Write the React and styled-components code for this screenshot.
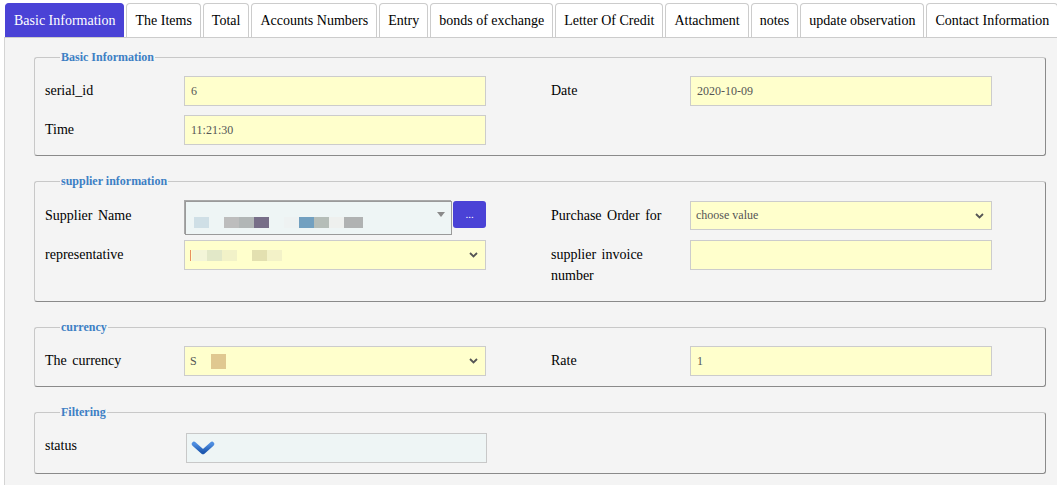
import React from 'react';
import styled, { createGlobalStyle } from 'styled-components';

const GlobalStyle = createGlobalStyle`
  html, body {
    margin: 0;
    padding: 0;
    background: #fff;
    overflow: hidden;
  }
`;

const tabs = [
  'Basic Information',
  'The Items',
  'Total',
  'Accounts Numbers',
  'Entry',
  'bonds of exchange',
  'Letter Of Credit',
  'Attachment',
  'notes',
  'update observation',
  'Contact Information',
];

const Blur = ({ blocks }) => (
  <BlurRow>
    {blocks.map(([w, c, ml], i) => (
      <BlurBlock key={i} style={{ width: w, background: c, marginLeft: ml || 0 }} />
    ))}
  </BlurRow>
);

const Chevron = () => (
  <svg width="9" height="6" viewBox="0 0 9 6">
    <path d="M1 1 L4.5 4.5 L8 1" fill="none" stroke="#555" strokeWidth="1.8" />
  </svg>
);

const App = () => (
  <Page>
    <GlobalStyle />
    <TabBar>
      {tabs.map((t, i) => (
        <Tab key={t} active={i === 0}>{t}</Tab>
      ))}
    </TabBar>
    <Panel>
      <Fieldset>
        <Legend>Basic Information</Legend>
        <Row>
          <Cell>
            <Label>serial_id</Label>
            <Input>6</Input>
          </Cell>
          <Cell>
            <Label>Date</Label>
            <Input>2020-10-09</Input>
          </Cell>
        </Row>
        <Row>
          <Cell>
            <Label>Time</Label>
            <Input>11:21:30</Input>
          </Cell>
        </Row>
      </Fieldset>

      <Fieldset>
        <Legend>supplier information</Legend>
        <Row top={1}>
          <Cell>
            <Label>Supplier Name</Label>
            <SupplierWrap>
              <SupplierSelect>
                <Blur
                  blocks={[
                    [15, '#cfdfe6', 7],
                    [15, '#bdbdbd', 15],
                    [15, '#b1b6b6'],
                    [15, '#776e88'],
                    [15, '#eef2f2', 15],
                    [15, '#72a0c0'],
                    [15, '#b5bdb8'],
                    [15, '#eef0ee'],
                    [19, '#b0b2b2'],
                  ]}
                />
                <Triangle />
              </SupplierSelect>
              <DotsButton>...</DotsButton>
            </SupplierWrap>
          </Cell>
          <Cell>
            <Label>Purchase Order for</Label>
            <Select short>
              <span>choose value</span>
              <Chevron />
            </Select>
          </Cell>
        </Row>
        <Row>
          <Cell>
            <Label>representative</Label>
            <Select>
              <Blur
                blocks={[
                  [1, '#e89060', 0],
                  [15, '#f3f5d8', 1],
                  [15, '#e2e8c8'],
                  [15, '#f2f2c8'],
                  [15, '#e3e0b0', 15],
                  [15, '#f3f2c8'],
                ]}
              />
              <Chevron />
            </Select>
          </Cell>
          <Cell>
            <Label>supplier invoice number</Label>
            <Input />
          </Cell>
        </Row>
      </Fieldset>

      <Fieldset>
        <Legend>currency</Legend>
        <Row>
          <Cell>
            <Label>The currency</Label>
            <Select>
              <CurrencyValue>
                S<CurrencyBlock />
              </CurrencyValue>
              <Chevron />
            </Select>
          </Cell>
          <Cell>
            <Label>Rate</Label>
            <Input>1</Input>
          </Cell>
        </Row>
      </Fieldset>

      <Fieldset>
        <Legend>Filtering</Legend>
        <Row>
          <Cell>
            <Label>status</Label>
            <StatusBox>
              <svg width="24" height="14" viewBox="0 0 24 14">
                <defs>
                  <linearGradient id="chev" x1="0" y1="0" x2="0" y2="1">
                    <stop offset="0" stopColor="#4f8ee0" />
                    <stop offset="1" stopColor="#1d58b0" />
                  </linearGradient>
                </defs>
                <path
                  d="M3 3 L12 11 L21 3"
                  fill="none"
                  stroke="url(#chev)"
                  strokeWidth="4.5"
                  strokeLinecap="round"
                  strokeLinejoin="round"
                />
              </svg>
            </StatusBox>
          </Cell>
        </Row>
      </Fieldset>
    </Panel>
  </Page>
);

const Page = styled.div`
  font-family: "Liberation Serif", Tinos, "Times New Roman", serif;
  color: #000;
`;

const TabBar = styled.div`
  display: flex;
  gap: 2px;
  padding: 3px 0 0 5px;
  height: 34px;
  box-sizing: content-box;
`;

const Tab = styled.div`
  display: flex;
  align-items: center;
  height: 34px;
  box-sizing: border-box;
  padding: 0 8px;
  font-size: 14px;
  white-space: nowrap;
  border: 1px solid ${(p) => (p.active ? '#4a42d6' : '#cccccc')};
  border-bottom: none;
  border-radius: 4px 4px 0 0;
  background: ${(p) => (p.active ? '#4a42d6' : '#ffffff')};
  color: ${(p) => (p.active ? '#ffffff' : '#000000')};
`;

const Panel = styled.div`
  margin-left: 4px;
  width: 1070px;
  min-height: 448px;
  box-sizing: border-box;
  padding-top: 12px;
  background: #f4f4f4;
  border-top: 1px solid #cccccc;
  border-left: 1px solid #d4d4d4;
`;

const Fieldset = styled.fieldset`
  width: 1012px;
  box-sizing: border-box;
  margin: 0 0 18px 29px;
  padding: 12px 0 10px 10px;
  border: 1px solid #c8c8c8;
  border-right-color: #8a8a8a;
  border-bottom-color: #8a8a8a;
  border-radius: 3px;
  display: flex;
  flex-direction: column;
  gap: 9px;
`;

const Legend = styled.legend`
  margin-left: 15px;
  padding: 0 1px;
  font-size: 12px;
  line-height: 14px;
  font-weight: bold;
  color: #3d80c4;
`;

const Row = styled.div`
  display: flex;
  gap: 65px;
  margin-top: ${(p) => p.top || 0}px;
`;

const Cell = styled.div`
  display: grid;
  grid-template-columns: 139px 302px;
  align-items: start;
`;

const Label = styled.div`
  font-size: 14px;
  line-height: 21px;
  padding: 4px 14px 5px 0;
  word-spacing: 2px;
`;

const fieldBase = `
  height: 30px;
  box-sizing: border-box;
  border: 1px solid #cccccc;
  background: #ffffcc;
  font-size: 12px;
  color: #555;
  padding: 0 6px;
  display: flex;
  align-items: center;
`;

const Input = styled.div`
  ${fieldBase}
`;

const Select = styled.div`
  ${fieldBase}
  height: ${(p) => (p.short ? '29px' : '30px')};
  justify-content: space-between;
  padding-right: 7px;
  padding-left: 5px;
`;

const SupplierWrap = styled.div`
  display: flex;
  align-items: flex-start;
  gap: 1px;
  margin-bottom: -5px;
  margin-left: 1px;
`;

const SupplierSelect = styled.div`
  position: relative;
  width: 269px;
  height: 34px;
  box-sizing: border-box;
  border: 1px solid #9a9a9a;
  background: #eef5f5;
  box-shadow: -1px -1px 0 #a8a8a8;
  padding: 15px 0 0 1px;
`;

const Triangle = styled.span`
  position: absolute;
  right: 6px;
  top: 10px;
  width: 0;
  height: 0;
  border-left: 4px solid transparent;
  border-right: 4px solid transparent;
  border-top: 5px solid #8a8a8a;
`;

const DotsButton = styled.div`
  width: 33px;
  height: 27px;
  border-radius: 3px;
  background: #4a42d6;
  color: #fff;
  font-size: 11px;
  display: flex;
  align-items: center;
  justify-content: center;
  line-height: 1;
`;

const BlurRow = styled.div`
  display: flex;
  height: 11px;
`;

const BlurBlock = styled.span`
  display: block;
  height: 100%;
`;

const CurrencyValue = styled.span`
  display: flex;
  align-items: center;
`;

const CurrencyBlock = styled.span`
  display: inline-block;
  width: 15px;
  height: 15px;
  margin-left: 14px;
  background: #e0c890;
`;

const StatusBox = styled.div`
  height: 30px;
  width: 301px;
  margin: 2px 0 0 2px;
  box-sizing: border-box;
  border: 1px solid #c8c8c8;
  background: #eef5f5;
  display: flex;
  align-items: center;
  padding-left: 4px;
`;

export default App;
